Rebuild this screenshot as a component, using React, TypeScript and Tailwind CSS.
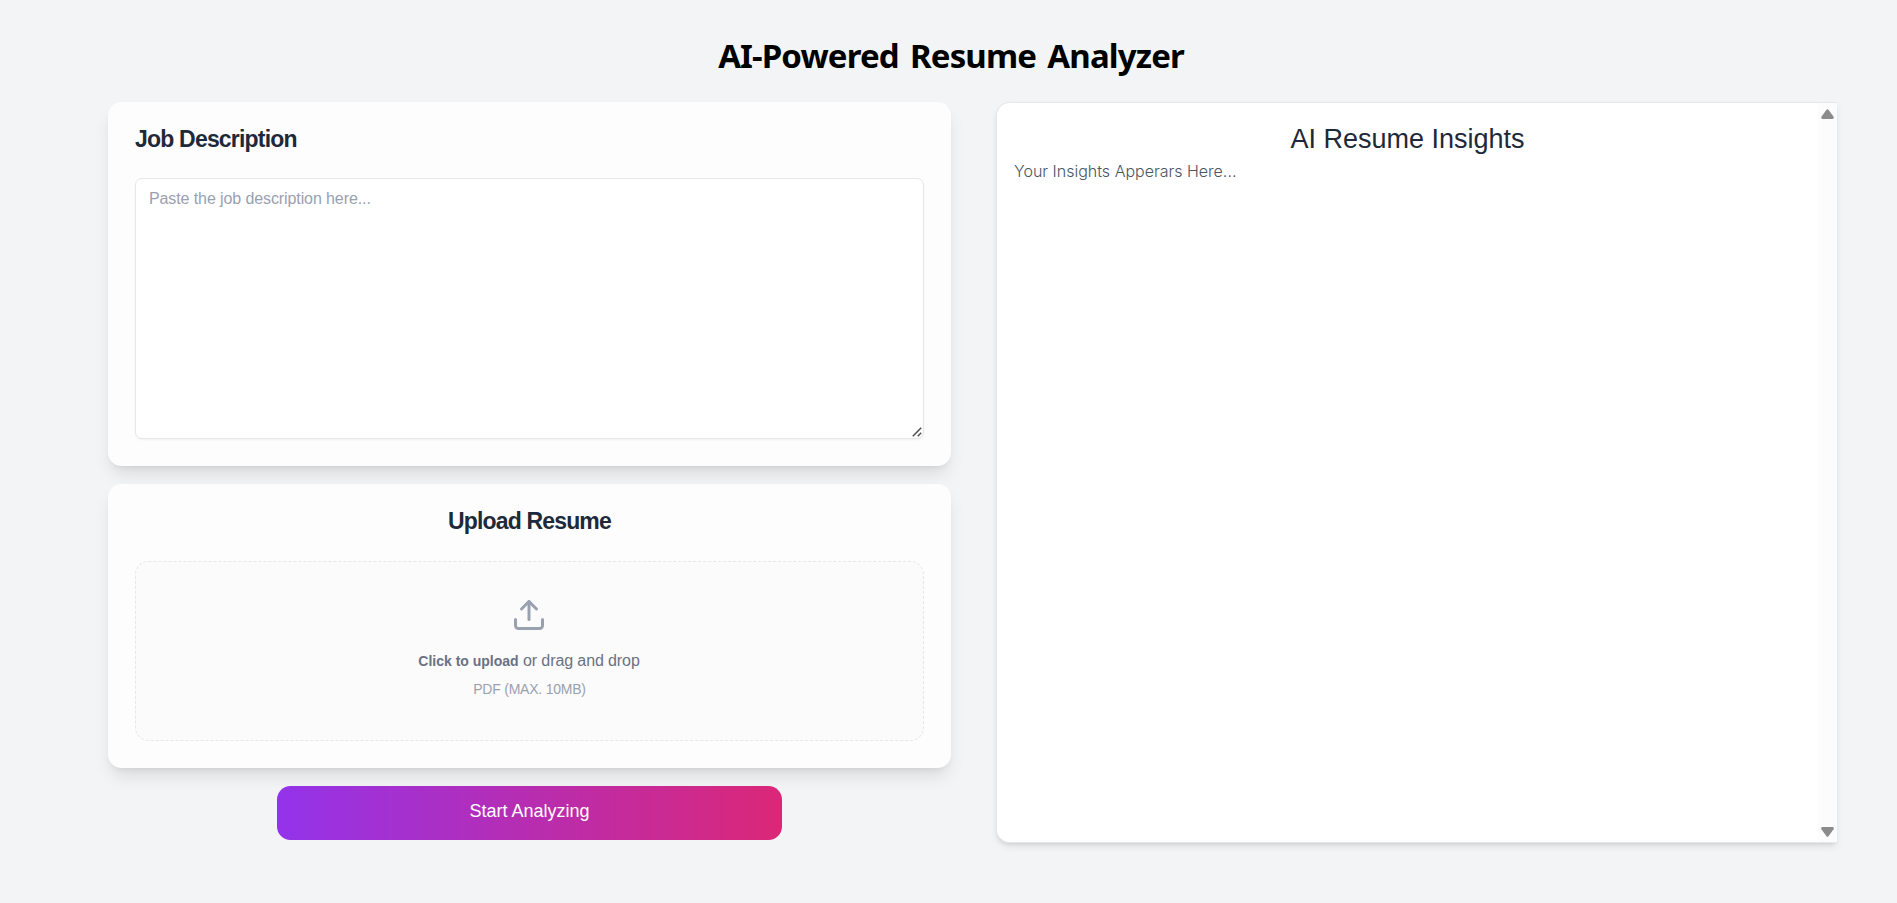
import React from "react";

const cardClass =
  "flex flex-col rounded-[13.5px] bg-[#fdfdfd] p-[27px] pt-[22px] shadow-[0_11px_17px_-3px_rgba(0,0,0,0.1),0_4px_7px_-4px_rgba(0,0,0,0.1)]";

function JobDescription() {
  return (
    <section className={`${cardClass} h-[364px]`}>
      <h2 className="h-[54px] text-[23px] leading-[30px] font-bold tracking-[-0.8px] text-gray-800">
        Job Description
      </h2>
      <div className="relative flex min-h-0 flex-1">
        <textarea
          placeholder="Paste the job description here..."
          className="block w-full resize-none rounded-[7px] border border-gray-200 bg-white px-[13px] py-[8px] text-[16px] leading-[24px] tracking-[-0.1px] shadow-[0_1px_2px_rgba(0,0,0,0.05)] outline-none placeholder:text-gray-400"
        />
        <svg
          className="pointer-events-none absolute right-[2px] bottom-[2px] size-[10px]"
          viewBox="0 0 10 10"
          stroke="#4d4d4d"
          strokeWidth="1.5"
        >
          <path d="M.8 9.2 9.2.8M5.8 9.2 9.2 5.8" />
        </svg>
      </div>
    </section>
  );
}

function UploadResume() {
  return (
    <section className={`${cardClass} mt-[18px] h-[284px]`}>
      <h2 className="h-[55px] text-center text-[23px] leading-[30px] font-bold tracking-[-0.85px] text-gray-800">
        Upload Resume
      </h2>
      <label className="flex w-full flex-1 cursor-pointer flex-col items-center rounded-[13.5px] border border-dashed border-gray-200 bg-[#fbfbfb] pt-[35px]">
        <svg
          className="mr-px size-[36px] text-gray-400"
          viewBox="0 0 24 24"
          fill="none"
          stroke="currentColor"
          strokeWidth="2"
          strokeLinecap="round"
          strokeLinejoin="round"
        >
          <path d="M21 15v4a2 2 0 0 1-2 2H5a2 2 0 0 1-2-2v-4" />
          <path d="m17 8-5-5-5 5" />
          <path d="M12 3v12" />
        </svg>
        <p className="mt-[16px] mr-px text-[16px] leading-[24px] tracking-[-0.1px] text-gray-500">
          <span className="text-[14px] font-bold tracking-normal">Click to upload</span> or drag and drop
        </p>
        <p className="mt-[5px] text-[14px] leading-[22px] tracking-[-0.22px] text-gray-400">
          PDF (MAX. 10MB)
        </p>
      </label>
    </section>
  );
}

function Insights() {
  return (
    <section className="flex h-[741px] w-[841px] rounded-[13.5px] rounded-r-none border border-r-0 border-gray-200 bg-white shadow-[0_4px_7px_-1px_rgba(0,0,0,0.1),0_2px_4px_-2px_rgba(0,0,0,0.1)]">
      <div className="flex-1 px-[17px] pt-[18px]">
        <h2 className="text-center text-[27px] leading-[36px] text-gray-800">AI Resume Insights</h2>
        <p className="font-[Inter,sans-serif] text-[16px] leading-[28px] font-light text-gray-600">
          Your Insights Apperars Here...
        </p>
      </div>
      <div className="flex w-[19px] flex-col items-center justify-between bg-[#fcfcfc] pt-[6px] pb-[5px]">
        <svg className="h-[10px] w-[13px]" viewBox="0 0 13 10" fill="#8b8b8b">
          <path d="M5.5.7Q6.5-.3 7.5.7L12.6 7.8Q13.3 10 11.5 10H1.5Q-.3 10 .4 7.8Z" />
        </svg>
        <svg className="h-[10px] w-[13px]" viewBox="0 0 13 10" fill="#8b8b8b">
          <path d="M5.5 9.3Q6.5 10.3 7.5 9.3L12.6 2.2Q13.3 0 11.5 0H1.5Q-.3 0 .4 2.2Z" />
        </svg>
      </div>
    </section>
  );
}

export default function App() {
  return (
    <main className="flex h-[903px] w-full flex-col bg-gray-100 font-['Liberation_Sans',Arial,sans-serif]">
      <h1 className="h-[102px] pt-[34px] pl-[5px] text-center font-['Noto_Sans',sans-serif] text-[33px] leading-[44px] font-bold tracking-[-0.87px] text-black [word-spacing:3.6px]">
        AI-Powered Resume Analyzer
      </h1>
      <div className="flex gap-[45px] pl-[108px]">
        <div className="flex w-[843px] flex-col">
          <JobDescription />
          <UploadResume />
          <button className="mt-[18px] h-[54px] w-[505px] self-center rounded-[13.5px] bg-linear-to-r/srgb from-[#9333ea] to-[#db2777] pb-[3px] text-[18px] text-white">
            Start Analyzing
          </button>
        </div>
        <Insights />
      </div>
    </main>
  );
}
